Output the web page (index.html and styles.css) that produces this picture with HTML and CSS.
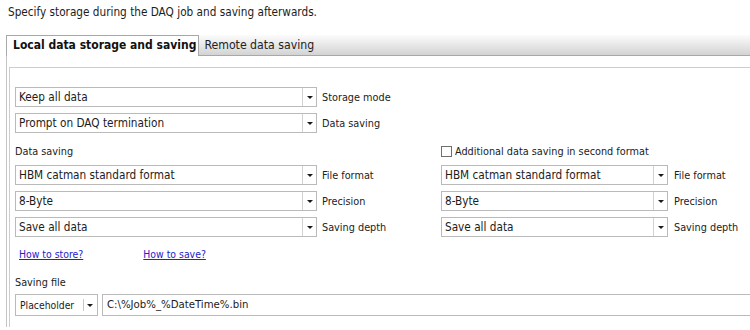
FILE: index.html
```html
<!DOCTYPE html>
<html lang="en">
<head>
    <meta charset="UTF-8">
    <title>DAQ job - Storage</title>
    <link rel="stylesheet" href="styles.css">
</head>
<body>
    <p class="intro">Specify storage during the DAQ job and saving afterwards.</p>

    <div class="tabs">
        <div class="tab-strip">
            <span class="tab active">Local data storage and saving</span>
            <span class="tab">Remote data saving</span>
        </div>

        <div class="tab-page">
            <div class="group">
                <!-- storage during the job -->
                <div class="row">
                    <div class="cell">
                        <div class="combo"><span class="combo-text">Keep all data</span><span class="combo-btn"><i class="arrow"></i></span></div>
                        <span class="label">Storage mode</span>
                    </div>
                </div>
                <div class="row">
                    <div class="cell">
                        <div class="combo"><span class="combo-text">Prompt on DAQ termination</span><span class="combo-btn"><i class="arrow"></i></span></div>
                        <span class="label">Data saving</span>
                    </div>
                </div>

                <!-- saving formats -->
                <div class="row row-head">
                    <div class="cell"><span class="caption">Data saving</span></div>
                    <label class="check"><span class="box"></span>Additional data saving in second format</label>
                </div>
                <div class="row">
                    <div class="cell">
                        <div class="combo"><span class="combo-text">HBM catman standard format</span><span class="combo-btn"><i class="arrow"></i></span></div>
                        <span class="label">File format</span>
                    </div>
                    <div class="combo narrow"><span class="combo-text">HBM catman standard format</span><span class="combo-btn"><i class="arrow"></i></span></div>
                    <span class="label right">File format</span>
                </div>
                <div class="row">
                    <div class="cell">
                        <div class="combo"><span class="combo-text">8-Byte</span><span class="combo-btn"><i class="arrow"></i></span></div>
                        <span class="label">Precision</span>
                    </div>
                    <div class="combo narrow"><span class="combo-text">8-Byte</span><span class="combo-btn"><i class="arrow"></i></span></div>
                    <span class="label right">Precision</span>
                </div>
                <div class="row row-save">
                    <div class="cell">
                        <div class="combo"><span class="combo-text">Save all data</span><span class="combo-btn"><i class="arrow"></i></span></div>
                        <span class="label">Saving depth</span>
                    </div>
                    <div class="combo narrow"><span class="combo-text">Save all data</span><span class="combo-btn"><i class="arrow"></i></span></div>
                    <span class="label right">Saving depth</span>
                </div>

                <div class="row row-links">
                    <a href="#" class="link">How to store?</a>
                    <a href="#" class="link second">How to save?</a>
                </div>

                <div class="row row-file">
                    <span class="caption">Saving file</span>
                </div>
                <div class="row row-path">
                    <div class="combo small"><span class="combo-text">Placeholder</span><span class="combo-btn split"><i class="arrow"></i></span></div>
                    <div class="path">C:\%Job%_%DateTime%.bin</div>
                </div>
            </div>
        </div>
    </div>
</body>
</html>
```

FILE: styles.css
```css
body {
    margin: 0;
    font-family: "DejaVu Sans Condensed", "DejaVu Sans", sans-serif;
    font-size: 10.8px;
    color: #1c1c1c;
    background: #fff;
    overflow: hidden;
}
.intro {
    margin: 0;
    height: 35px;
    padding: 5px 8px 0;
    box-sizing: border-box;
    font-size: 11.7px;
    line-height: 14px;
}
.tabs {
    margin-left: 6px;
}
.tab-strip {
    display: flex;
    align-items: flex-end;
    height: 20px;
    background: linear-gradient(#fcfcfc, #d3d3d3);
    border-bottom: 1px solid #a8a8a8;
}
.tab {
    height: 19px;
    line-height: 19px;
    padding: 0 5px 0 5px;
    font-size: 12.2px;
    color: #222;
}
.tab.active {
    height: 20px;
    margin-bottom: -1px;
    padding: 0 2px 0 6px;
    background: #fff;
    border: 1px solid #a8a8a8;
    border-bottom: none;
    font-size: 12px;
    font-weight: bold;
    color: #111;
}
.tab-page {
    border-left: 1px solid #c4c4c4;
    padding: 11px 0 0 2px;
}
.group {
    border-top: 1px solid #cdcdcd;
    border-left: 1px solid #cdcdcd;
    padding: 19px 0 0 5px;
    height: 240px;
}
.row {
    display: flex;
    align-items: center;
    height: 20px;
    margin-bottom: 6px;
}
.row-head {
    margin-top: 8px;
    margin-bottom: 4px;
}
.row-save {
    margin-top: 3px;
    margin-bottom: 7px;
}
.row-links {
    margin-bottom: 8px;
}
.row-file {
    margin-bottom: 2px;
}
.row-path {
    height: 22px;
}
.cell {
    display: flex;
    align-items: center;
    width: 426px;
}
.combo {
    display: flex;
    flex: none;
    width: 302px;
    height: 20px;
    box-sizing: border-box;
    border: 1px solid #bababa;
    background: #fff;
}
.combo.narrow {
    width: 227px;
}
.combo.small {
    width: 83px;
    height: 22px;
}
.combo-text {
    flex: 1;
    padding-left: 3px;
    font-size: 11.7px;
    line-height: 18px;
    white-space: nowrap;
    overflow: hidden;
}
.combo.small .combo-text {
    padding-left: 4px;
    font-size: 10.3px;
    line-height: 21px;
}
.combo-btn {
    display: flex;
    align-items: center;
    justify-content: center;
    width: 13px;
    border-left: 1px solid #d2d2d2;
}
.combo-btn.split {
    width: 14px;
    border-left: none;
    position: relative;
}
.combo-btn.split::before {
    content: "";
    position: absolute;
    left: 0;
    top: 4px;
    bottom: 4px;
    border-left: 1px solid #c8c8c8;
}
.arrow {
    width: 0;
    height: 0;
    border-left: 3px solid transparent;
    border-right: 3px solid transparent;
    border-top: 3px solid #1a1a1a;
}
.label {
    margin-left: 5px;
    white-space: nowrap;
}
.label.right {
    margin-left: 6px;
}
.caption {
    white-space: nowrap;
}
.check {
    display: flex;
    align-items: center;
    white-space: nowrap;
}
.box {
    width: 11px;
    height: 11px;
    box-sizing: border-box;
    border: 1px solid #6f6f6f;
    margin-right: 3px;
}
.link {
    color: #2222cc;
    text-decoration: underline;
    font-size: 10.4px;
    margin-left: 4px;
}
.link.second {
    margin-left: 60px;
}
.path {
    flex: 1;
    height: 22px;
    margin-left: 4px;
    box-sizing: border-box;
    border: 1px solid #bababa;
    border-right: none;
    padding-left: 4px;
    font-size: 11.3px;
    line-height: 19px;
    white-space: nowrap;
}
```
